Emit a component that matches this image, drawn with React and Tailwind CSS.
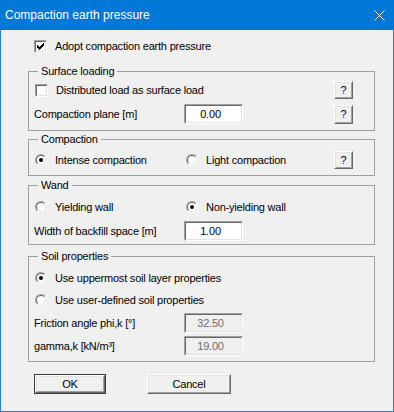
import React from 'react';

const Sunken = ({ className = '', inner = 'bg-white', children }) => (
  <div className={`border border-t-[#a0a0a0] border-l-[#a0a0a0] border-b-white border-r-white ${className}`}>
    <div className={`w-full h-full border border-t-[#696969] border-l-[#696969] border-b-[#e3e3e3] border-r-[#e3e3e3] ${inner}`}>
      {children}
    </div>
  </div>
);

const Checkbox = ({ checked }) => (
  <Sunken className="w-[13px] h-[13px] shrink-0" inner="bg-white flex items-center justify-center">
    {checked && (
      <svg width="7" height="7" viewBox="0 0 7 7" shapeRendering="crispEdges">
        <polygon points="0,2 2,4 6,0 7,0 7,2 2,7 0,5" fill="#000" />
      </svg>
    )}
  </Sunken>
);

const Radio = ({ checked }) => (
  <div className="w-[12px] h-[12px] shrink-0 rounded-full border border-t-[#a0a0a0] border-l-[#a0a0a0] border-b-white border-r-white">
    <div className="w-full h-full rounded-full border border-t-[#696969] border-l-[#696969] border-b-[#e3e3e3] border-r-[#e3e3e3] bg-white flex items-center justify-center">
      {checked && <div className="w-[4px] h-[4px] rounded-full bg-black" />}
    </div>
  </div>
);

const Field = ({ value, disabled }) => (
  <Sunken
    className="w-[59px] h-[20px] shrink-0"
    inner={`${disabled ? 'bg-[#f0f0f0] text-[#6d6d6d]' : 'bg-white text-black'} flex items-center justify-center pr-[6px]`}
  >
    {value}
  </Sunken>
);

const Button = ({ className = '', isDefault, children }) => (
  <div className={`${isDefault ? 'border border-[#3c3c3c]' : ''} ${className}`}>
    <div className="w-full h-full border border-t-white border-l-white border-b-[#696969] border-r-[#696969]">
      <div className="w-full h-full border border-t-[#e3e3e3] border-l-[#e3e3e3] border-b-[#a0a0a0] border-r-[#a0a0a0] bg-[#f0f0f0] flex items-center justify-center">
        {children}
      </div>
    </div>
  </div>
);

const Help = ({ className = '' }) => (
  <Button className={`ml-auto w-[19px] h-[18px] shrink-0 ${className}`}>?</Button>
);

const Group = ({ title, className = '', children }) => (
  <fieldset className={`border border-[#a0a0a0] ${className}`}>
    <legend className="ml-[9px] px-[3px] leading-[14px]">{title}</legend>
    <div className="pl-[6px] pr-[21px]">{children}</div>
  </fieldset>
);

export default function App() {
  return (
    <div className="w-[394px] h-[412px] flex flex-col font-['Liberation_Sans',Arial,sans-serif] text-[11px] tracking-[-0.2px] text-black">
      <div className="h-[30px] bg-[#0078d7] flex items-center pl-[5px] pr-[9px] text-white text-[12px] tracking-normal">
        <span>Compaction earth pressure</span>
        <svg className="ml-auto" width="11" height="11" viewBox="0 0 11 11">
          <path d="M0.5 0.5 L10.5 10.5 M10.5 0.5 L0.5 10.5" stroke="#fff" strokeWidth="1" />
        </svg>
      </div>

      <div className="flex-1 bg-[#f0f0f0] border-l border-r border-b border-[#2a7bd1] pl-[27px] pr-[18px]">
        <div className="mt-[7px] h-[18px] flex items-center pl-[6px]">
          <Checkbox checked />
          <span className="ml-[8px]">Adopt compaction earth pressure</span>
        </div>

        <Group title="Surface loading" className="mt-[9px] pb-[6px]">
          <div className="mt-[3px] h-[18px] flex items-center">
            <Checkbox />
            <span className="ml-[8px]">Distributed load as surface load</span>
            <Help />
          </div>
          <div className="mt-[5px] h-[20px] flex items-center">
            <span className="-ml-[1px] w-[150px]">Compaction plane [m]</span>
            <Field value="0.00" />
            <Help className="h-[19px]" />
          </div>
        </Group>

        <Group title="Compaction" className="mt-[1px] pb-[6px]">
          <div className="mt-[5px] h-[18px] flex items-center">
            <div className="w-[151px] flex items-center">
              <Radio checked />
              <span className="ml-[8px]">Intense compaction</span>
            </div>
            <Radio />
            <span className="ml-[8px]">Light compaction</span>
            <Help />
          </div>
        </Group>

        <Group title="Wand" className="mt-[2px] pb-[3px]">
          <div className="mt-[6px] h-[18px] flex items-center">
            <div className="w-[151px] flex items-center">
              <Radio />
              <span className="ml-[8px]">Yielding wall</span>
            </div>
            <Radio checked />
            <span className="ml-[8px]">Non-yielding wall</span>
          </div>
          <div className="mt-[5px] h-[20px] flex items-center">
            <span className="-ml-[1px] w-[150px]">Width of backfill space [m]</span>
            <Field value="1.00" />
          </div>
        </Group>

        <Group title="Soil properties" className="mt-[4px] pb-[5px]">
          <div className="mt-[6px] h-[18px] flex items-center">
            <Radio checked />
            <span className="ml-[8px]">Use uppermost soil layer properties</span>
          </div>
          <div className="mt-[4px] h-[18px] flex items-center">
            <Radio />
            <span className="ml-[8px]">Use user-defined soil properties</span>
          </div>
          <div className="mt-[4px] h-[20px] flex items-center">
            <span className="-ml-[1px] w-[150px]">Friction angle phi,k [°]</span>
            <Field value="32.50" disabled />
          </div>
          <div className="mt-[3px] h-[20px] flex items-center">
            <span className="-ml-[1px] w-[150px]">gamma,k [kN/m³]</span>
            <Field value="19.00" disabled />
          </div>
        </Group>

        <div className="mt-[12px] flex pl-[6px]">
          <Button isDefault className="w-[72px] h-[20px]">OK</Button>
          <Button className="ml-[41px] w-[84px] h-[20px]">Cancel</Button>
        </div>
      </div>
    </div>
  );
}
